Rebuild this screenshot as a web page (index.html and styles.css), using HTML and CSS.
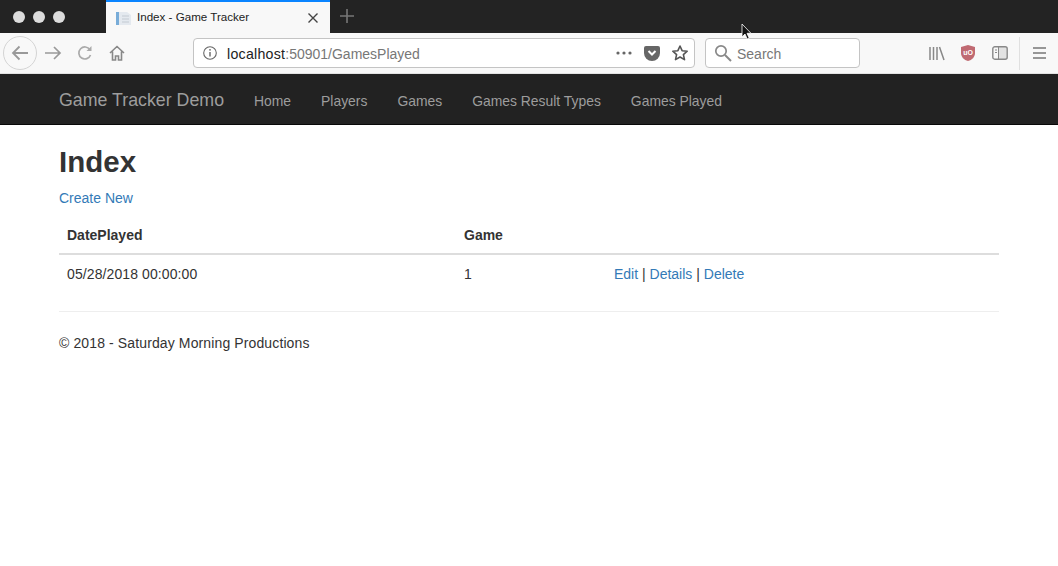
FILE: index.html
```html
<!DOCTYPE html>
<html lang="en">
<head>
    <meta charset="UTF-8">
    <title>Index - Game Tracker</title>
    <link rel="stylesheet" href="styles.css">
</head>
<body>
    <div class="tabbar">
        <div class="dots"><span class="dot"></span><span class="dot"></span><span class="dot"></span></div>
        <div class="tab">
            <svg class="favicon" width="16" height="16" viewBox="0 0 16 16">
                <path d="M0 2h11l4 3v10H0z" fill="#e4e9ef"/>
                <rect x="0" y="2" width="3" height="13" fill="#78acd8"/>
                <path d="M6 6h7M6 9h7M6 12h7" stroke="#c3cad2" stroke-width="1"/>
            </svg>
            <span class="tab_title">Index - Game Tracker</span>
            <svg class="tab_close" width="12" height="12" viewBox="0 0 12 12">
                <path d="M1.5 1.5l9 9M10.5 1.5l-9 9" stroke="#444" stroke-width="1.4"/>
            </svg>
        </div>
        <svg class="new_tab" width="16" height="16" viewBox="0 0 16 16">
            <path d="M8 1v14M1 8h14" stroke="#777" stroke-width="1.6"/>
        </svg>
    </div>

    <div class="toolbar">
        <div class="back">
            <svg width="20" height="20" viewBox="0 0 20 20">
                <path d="M18 10H3M9.500 3.500L3 10l6.500 6.500" fill="none" stroke="#999" stroke-width="1.800"/>
            </svg>
        </div>
        <svg class="tool_icon forward" width="18" height="18" viewBox="0 0 18 18">
            <path d="M1 9h15M10 3l6 6-6 6" fill="none" stroke="#999" stroke-width="1.700"/>
        </svg>
        <svg class="tool_icon reload" width="16" height="16" viewBox="0 0 16 16">
            <path d="M13.500 10a6 6 0 1 1-.6-5.300" fill="none" stroke="#aaa" stroke-width="1.700"/>
            <path d="M14.500 1v5h-5z" fill="#aaa"/>
        </svg>
        <svg class="tool_icon home" width="16" height="16" viewBox="0 0 16 16">
            <path d="M1 8l7-6.500L15 8M3.500 6.500V15h3v-4h3v4h3V6.500" fill="none" stroke="#888" stroke-width="1.600"/>
        </svg>
        <div class="urlbar">
            <svg class="info" width="16" height="16" viewBox="0 0 16 16">
                <circle cx="8" cy="8" r="6.300" fill="none" stroke="#666" stroke-width="1.100"/>
                <path d="M8 7v4.500" stroke="#666" stroke-width="1.400"/>
                <circle cx="8" cy="4.800" r="0.900" fill="#666"/>
            </svg>
            <span class="url"><span class="url_host">localhost</span><span class="url_rest">:50901/GamesPlayed</span></span>
            <svg class="more" width="16" height="4" viewBox="0 0 16 4">
                <circle cx="2" cy="2" r="1.600" fill="#666"/>
                <circle cx="8" cy="2" r="1.600" fill="#666"/>
                <circle cx="14" cy="2" r="1.600" fill="#666"/>
            </svg>
            <svg class="pocket" width="16" height="15" viewBox="0 0 16 15">
                <path d="M2 0h12a2 2 0 0 1 2 2v5a8 8 0 0 1-16 0V2a2 2 0 0 1 2-2z" fill="#666"/>
                <path d="M4.500 5L8 8.500 11.500 5" fill="none" stroke="#fff" stroke-width="2"/>
            </svg>
            <svg class="star" width="18" height="18" viewBox="0 0 18 18">
                <path d="M9 2l2.100 4.700 5.100.5-3.800 3.400 1.100 5L9 13l-4.500 2.600 1.100-5L1.800 7.200l5.100-.5z" fill="none" stroke="#555" stroke-width="1.600" stroke-linejoin="round"/>
            </svg>
        </div>
        <div class="searchbar">
            <svg width="18" height="18" viewBox="0 0 18 18">
                <circle cx="7" cy="7" r="5.200" fill="none" stroke="#888" stroke-width="1.700"/>
                <path d="M11 11l6 6" stroke="#888" stroke-width="2"/>
            </svg>
            <span class="search_text">Search</span>
        </div>
        <svg class="library" width="16" height="15" viewBox="0 0 16 15">
            <path d="M1 1v13M4.500 1v13M8 1v13M10.500 1l4.500 13" stroke="#888" stroke-width="1.500" fill="none"/>
        </svg>
        <svg class="ublock" width="16" height="18" viewBox="0 0 16 18">
            <path d="M8 1l7 2v6c0 4-3 7-7 8-4-1-7-4-7-8V3z" fill="#c06a72"/>
            <text x="8" y="10.500" class="ublock_text" text-anchor="middle">uO</text>
        </svg>
        <svg class="sidebar" width="16" height="14" viewBox="0 0 16 14">
            <rect x="6" y="1" width="9" height="12" fill="#e2e2e2"/>
            <rect x="0.800" y="0.800" width="14.400" height="12.400" rx="2" fill="none" stroke="#888" stroke-width="1.400"/>
            <path d="M6.500 1v12" stroke="#888" stroke-width="1"/>
            <path d="M3 4h2M3 6.500h2" stroke="#888" stroke-width="1"/>
        </svg>
        <div class="tool_sep"></div>
        <svg class="menu" width="13" height="12" viewBox="0 0 13 12">
            <path d="M0 1h13M0 6h13M0 11h13" stroke="#777" stroke-width="1.500"/>
        </svg>
    </div>

    <nav class="navbar">
        <a class="brand">Game Tracker Demo</a>
        <a class="nav_link">Home</a>
        <a class="nav_link">Players</a>
        <a class="nav_link">Games</a>
        <a class="nav_link">Games Result Types</a>
        <a class="nav_link">Games Played</a>
    </nav>

    <div class="container">
        <h2 class="title">Index</h2>
        <p class="create"><a class="link">Create New</a></p>
        <table class="table">
            <thead>
                <tr>
                    <th class="col_date">DatePlayed</th>
                    <th class="col_game">Game</th>
                    <th></th>
                </tr>
            </thead>
            <tbody>
                <tr>
                    <td class="date_cell">05/28/2018 00:00:00</td>
                    <td>1</td>
                    <td><a class="link">Edit</a> | <a class="link">Details</a> | <a class="link">Delete</a></td>
                </tr>
            </tbody>
        </table>
        <hr class="rule">
        <footer class="footer">© 2018 - Saturday Morning Productions</footer>
    </div>

    <svg class="cursor" width="12" height="18" viewBox="0 0 12 18">
        <path d="M1 1v13l3-3 2.200 5 2-.9-2.200-4.800H10z" fill="#111" stroke="#fff" stroke-width="0.800"/>
    </svg>
</body>
</html>
```

FILE: styles.css
```css
* {
    box-sizing: border-box;
}
body {
    margin: 0;
    position: relative;
    background: #fff;
    color: #333;
    font-family: "Liberation Sans", Arial, sans-serif;
    font-size: 14px;
    line-height: 20px;
    overflow: hidden;
}

/* browser window */
.tabbar {
    display: flex;
    align-items: center;
    height: 33px;
    background: #232323;
}
.dots {
    display: flex;
    gap: 8px;
    width: 106px;
    padding-left: 13px;
}
.dot {
    width: 12px;
    height: 12px;
    border-radius: 50%;
    background: #dcdcdc;
}
.tab {
    display: flex;
    align-items: center;
    width: 224px;
    height: 33px;
    padding: 0 11px 0 10px;
    background: #f8f8f8;
    border-top: 2px solid #0a84ff;
}
.favicon {
    margin-right: 5px;
}
.tab_title {
    flex: 1;
    padding-bottom: 2px;
    font-size: 11.600px;
    color: #222;
}
.new_tab {
    margin: 0 0 2px 9px;
}
.toolbar {
    display: flex;
    align-items: center;
    height: 41px;
    background: #f8f8f8;
    border-bottom: 1px solid #e2e2e2;
}
.back {
    display: flex;
    align-items: center;
    justify-content: center;
    flex: none;
    width: 34px;
    height: 34px;
    margin-left: 3px;
    border: 1px solid #d4d4d4;
    border-radius: 50%;
}
.tool_icon {
    flex: none;
}
.forward {
    margin-left: 7px;
}
.reload {
    margin-left: 15px;
}
.home {
    margin-left: 16px;
}
.urlbar {
    display: flex;
    align-items: center;
    flex: none;
    width: 502px;
    height: 30px;
    margin-left: 68px;
    padding: 0 5px 0 8px;
    background: #fff;
    border: 1px solid #c4c4c4;
    border-radius: 4px;
}
.url {
    flex: 1;
    margin-left: 9px;
    padding-top: 2px;
    font-size: 14.200px;
    color: #222;
}
.url_host {
    letter-spacing: 0.25px;
}
.url_rest {
    font-size: 14px;
    color: #777;
}
.pocket {
    margin-left: 12px;
}
.star {
    margin-left: 11px;
}
.searchbar {
    display: flex;
    align-items: center;
    flex: none;
    width: 155px;
    height: 30px;
    margin-left: 10px;
    padding-left: 8px;
    background: #fff;
    border: 1px solid #c4c4c4;
    border-radius: 4px;
}
.search_text {
    margin-left: 5px;
    padding-top: 2px;
    color: #777;
}
.library {
    margin-left: 69px;
}
.ublock {
    margin-left: 15px;
}
.ublock_text {
    font-size: 7px;
    font-weight: bold;
    fill: #fff;
}
.sidebar {
    margin-left: 16px;
}
.tool_sep {
    width: 1px;
    height: 33px;
    margin-left: 11px;
    background: #e0e0e0;
}
.menu {
    margin-left: 13px;
}

/* site */
.navbar {
    display: flex;
    align-items: baseline;
    height: 51px;
    padding: 16px 0 0 59px;
    background: #222;
    border-bottom: 1px solid #080808;
}
.brand {
    margin-right: 15px;
    font-size: 17.800px;
    color: #9d9d9d;
}
.nav_link {
    padding: 0 15px;
    font-size: 13.900px;
    color: #9d9d9d;
}
.container {
    width: 999px;
    margin-left: 59px;
}
.title {
    margin: 20px 0 10px;
    font-size: 29.500px;
    line-height: 33px;
    font-weight: bold;
    color: #333;
}
.create {
    margin: 0 0 10px;
}
.link {
    color: #337ab7;
}
.table {
    width: 940px;
    border-collapse: collapse;
    table-layout: fixed;
}
.table th {
    padding: 7px 8px 8px;
    text-align: left;
    border-bottom: 2px solid #ddd;
}
.table td {
    padding: 9px 8px 8px;
}
.date_cell {
    letter-spacing: 0.1px;
}
.col_date {
    width: 397px;
}
.col_game {
    width: 150px;
}
.rule {
    width: 940px;
    margin: 19px 0 21px;
    border: 0;
    border-top: 1px solid #eee;
}
.footer {
    letter-spacing: 0.12px;
    color: #333;
}
.cursor {
    position: absolute;
    left: 741px;
    top: 23px;
}
```
